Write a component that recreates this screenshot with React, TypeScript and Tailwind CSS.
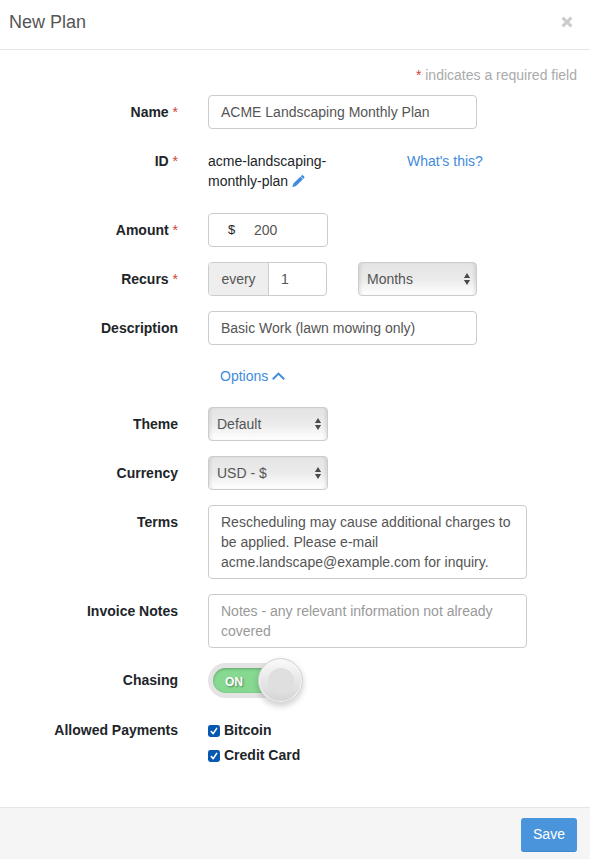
import type { ReactNode } from "react";

const control = "rounded border border-[#ccc] bg-white text-[#555]";

function Row({ label, required, className = "", children }: { label?: string; required?: boolean; className?: string; children: ReactNode }) {
  return (
    <div className={`grid grid-cols-[178px_1fr] gap-[30px] ${className}`}>
      <div className="whitespace-nowrap pt-[7px] text-right font-bold">
        {label}
        {required && <span className="font-normal text-[#cd4440]"> *</span>}
      </div>
      <div>{children}</div>
    </div>
  );
}

function Select({ value, className }: { value: string; className: string }) {
  return (
    <button
      className={`flex h-[34px] items-center justify-between rounded border border-[#ccc] bg-linear-to-b from-[#e4e4e4] via-[#ebebeb] to-white pl-2 pr-[5px] text-[#555] shadow-[inset_3px_0_3px_-1px_rgba(0,0,0,0.08),inset_-3px_0_3px_-1px_rgba(0,0,0,0.08)] ${className}`}
    >
      {value}
      <svg width="8" height="14" viewBox="0 0 8 14" fill="#4a4a4a">
        <path d="M.9 5.9 4 .9l3.1 5ZM.9 8.1h6.2L4 13.1Z" />
      </svg>
    </button>
  );
}

function Check({ label }: { label: string }) {
  return (
    <div className="flex h-[25px] items-center gap-1 font-bold">
      <svg className="mt-0.5" width="12" height="12" viewBox="0 0 12 12">
        <rect width="12" height="12" rx="2.4" fill="#0759b0" />
        <path d="m3.3 6.5 1.9 2.1 3.5-5.2" fill="none" stroke="#fff" strokeWidth="1.6" strokeLinecap="round" strokeLinejoin="round" />
      </svg>
      {label}
    </div>
  );
}

export default function App() {
  return (
    <div className="flex h-[859px] w-[590px] flex-col bg-white font-['Liberation_Sans',Arial,sans-serif] text-[14px] leading-5 text-[#212529]">
      <header className="flex h-[50px] items-center justify-between border-b border-[#e5e5e5] pb-[5px] pl-[9px] pr-[17px]">
        <h1 className="text-[18px] text-[#555]">New Plan</h1>
        <svg width="12" height="12" viewBox="0 0 12 12" stroke="#ccc" strokeWidth="3">
          <path d="m1.6 1.6 8.8 8.8m0-8.8-8.8 8.8" />
        </svg>
      </header>

      <main className="flex-1">
        <p className="mb-[10px] mt-[15px] pr-[13px] text-right text-[#aaa]">
          <span className="text-[#cd4440]">*</span> indicates a required field
        </p>

        <div className="flex flex-col gap-[15px]">
          <Row label="Name" required>
            <div className={`${control} flex h-[34px] w-[269px] items-center px-3`}>ACME Landscaping Monthly Plan</div>
          </Row>
          <Row label="ID" required>
            <div className="flex h-[54px] pt-[7px]">
              <div className="w-[199px]">
                acme-landscaping-
                <br />
                <span className="inline-flex items-center gap-1">
                  monthly-plan
                  <svg width="13" height="13" viewBox="0 0 13 13" fill="#428bdc">
                    <path d="M.3 12.2 1.4 8.6 8.3 1.7l2.6 2.6L4 11.1ZM8.7 1.3l.8-.8q.8-.8 1.6 0l1 1q.8.8 0 1.6l-.8.8Z" />
                  </svg>
                </span>
              </div>
              <a className="text-[#428bdc]">What's this?</a>
            </div>
          </Row>
          <Row label="Amount" required>
            <div className={`${control} flex h-[34px] w-[120px] items-center pl-[19px]`}>
              <span className="w-[26px] text-[13px] text-[#212529]">$</span>200
            </div>
          </Row>
          <Row label="Recurs" required>
            <div className="flex">
              <div className={`${control} flex h-[34px] w-[119px] overflow-hidden`}>
                <span className="flex w-[60px] items-center justify-center border-r border-[#ccc] bg-[#eee]">every</span>
                <span className="flex items-center pl-3">1</span>
              </div>
              <Select value="Months" className="ml-[31px] w-[119px]" />
            </div>
          </Row>
          <Row label="Description">
            <div className={`${control} flex h-[34px] w-[269px] items-center px-3`}>Basic Work (lawn mowing only)</div>
          </Row>
          <Row>
            <a className="flex h-8 items-center gap-1 pl-3 text-[#428bdc]">
              Options
              <svg width="13" height="8" viewBox="0 0 13 8" fill="none" stroke="#428bdc" strokeWidth="2">
                <path d="m.8 7.2 5.7-5.6 5.7 5.6" />
              </svg>
            </a>
          </Row>
          <Row label="Theme">
            <Select value="Default" className="w-[120px]" />
          </Row>
          <Row label="Currency">
            <Select value="USD - $" className="w-[120px]" />
          </Row>
          <Row label="Terms">
            <div className={`${control} h-[74px] w-[319px] px-3 py-[6px]`}>
              Rescheduling may cause additional charges to
              <br />
              be applied. Please e-mail
              <br />
              acme.landscape@example.com for inquiry.
            </div>
          </Row>
          <Row label="Invoice Notes">
            <div className="h-[54px] w-[319px] rounded border border-[#ccc] px-3 py-[6px] text-[#999]">
              Notes - any relevant information not already
              <br />
              covered
            </div>
          </Row>
          <Row label="Chasing">
            <div className="relative h-[35px] w-[92px] rounded-full bg-[#e4e4e4] p-[5px]">
              <div className="flex h-[25px] w-[75px] items-center rounded-l-full bg-[#87d991] pl-3 pt-0.5 text-[12px] font-bold text-white shadow-[inset_0_1px_3px_rgba(0,0,0,0.25)] [text-shadow:1px_1px_2px_rgba(0,0,0,0.4)]">
                ON
              </div>
              <div className="absolute left-[50px] top-[-5px] flex size-[45px] items-center justify-center rounded-full border border-[#d2d2d2] bg-linear-to-b from-[#fafafa] to-[#d4d4d4] shadow-[0_3px_6px_rgba(0,0,0,0.2),inset_0_0_0_1px_#f5f5f5]">
                <div className="size-[26px] rounded-full bg-[#dfdfdf]" />
              </div>
            </div>
          </Row>
          <Row label="Allowed Payments">
            <div className="pt-[4px]">
              <Check label="Bitcoin" />
              <Check label="Credit Card" />
            </div>
          </Row>
        </div>
      </main>

      <footer className="flex h-[52px] items-start justify-end border-t border-[#e5e5e5] bg-[#f5f5f5] pr-[13px] pt-[10px]">
        <button className="h-[34px] w-14 rounded-[3px] border-b border-[#3f87c8] bg-[#4a94db] pb-px text-white">Save</button>
      </footer>
    </div>
  );
}
